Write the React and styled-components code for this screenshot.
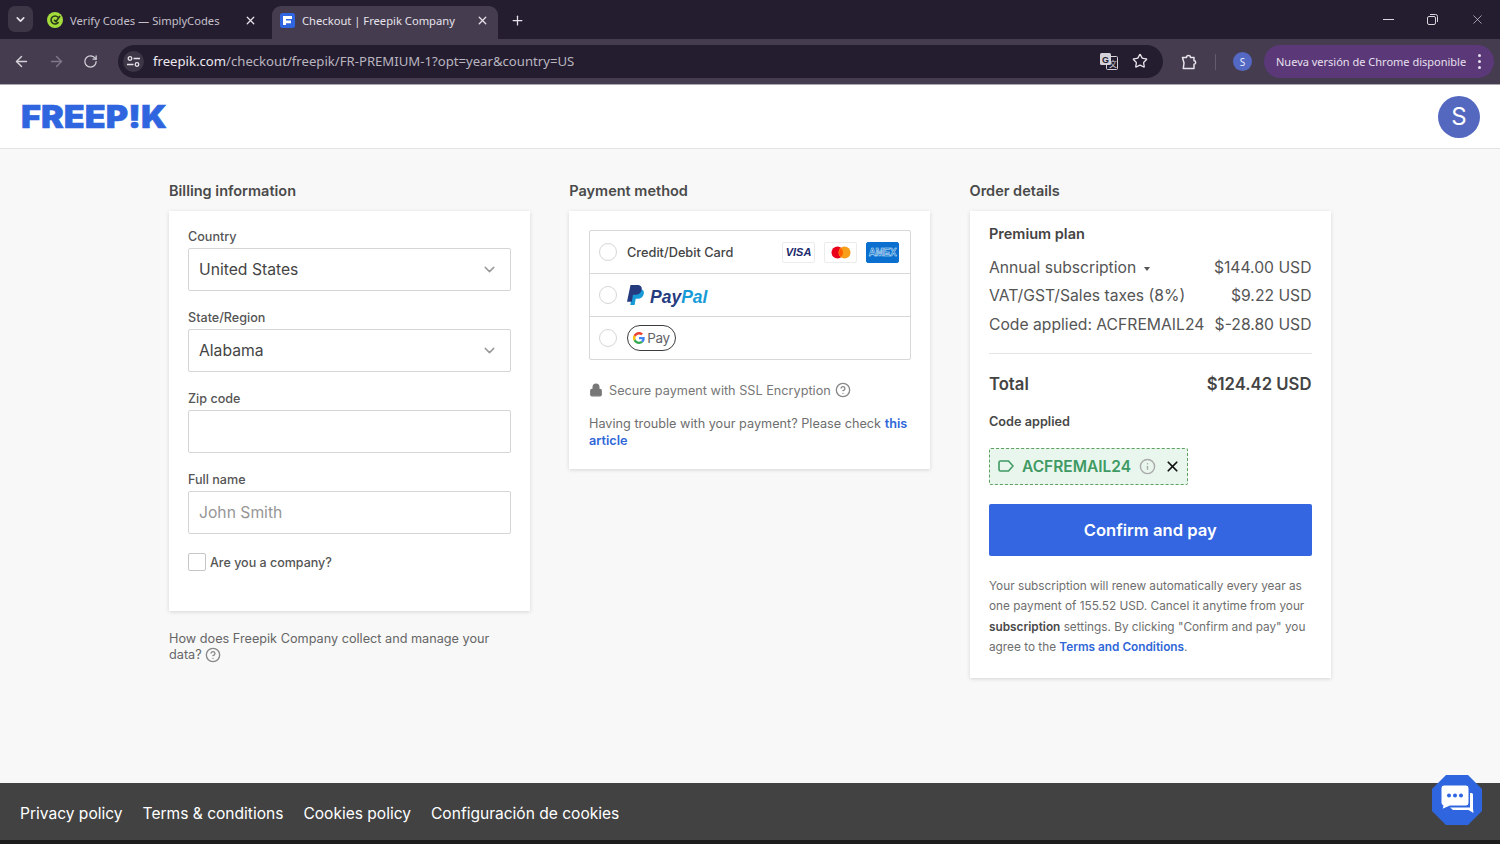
import React from 'react';
import styled, { createGlobalStyle } from 'styled-components';
import {
  ArrowLeft, ArrowRight, RotateCw, X, Plus, ChevronDown, Star, Lock, CircleHelp, Info,
} from 'lucide-react';

const GlobalStyle = createGlobalStyle`
  html, body { margin: 0; padding: 0; height: 100%; }
  body { font-family: Inter, "Liberation Sans", sans-serif; background: #f8f8f8; overflow: hidden; }
  * { box-sizing: border-box; }
`;

const Page = styled.div`
  height: 844px;
  display: flex;
  flex-direction: column;
  position: relative;
`;

/* browser chrome */
const TabStrip = styled.div`
  height: 39px;
  background: #241d30;
  display: flex;
  align-items: flex-end;
  padding-left: 8px;
  color: #d9d6de;
  font-family: "Noto Sans", sans-serif;
  font-size: 11.2px;
`;

const TabMenu = styled.div`
  width: 25px;
  height: 26px;
  margin-bottom: 7px;
  border-radius: 7px;
  background: #3d3647;
  display: flex;
  align-items: center;
  justify-content: center;
`;

const Tab = styled.div`
  width: ${p => p.$w}px;
  height: 33px;
  margin-left: ${p => p.$ml}px;
  padding: 0 ${p => p.$pr}px 5px ${p => p.$pl}px;
  display: flex;
  align-items: center;
  gap: 7px;
  border-radius: 9px 9px 0 0;
  background: ${p => (p.$active ? '#453c50' : 'transparent')};
  color: ${p => (p.$active ? '#e6e3ea' : '#c4c0ca')};
`;

const TabTitle = styled.span`
  flex: 1;
  white-space: nowrap;
`;

const NewTab = styled.div`
  margin: 0 0 6px 12px;
  height: 26px;
  display: flex;
  align-items: center;
`;

const WindowButtons = styled.div`
  margin-left: auto;
  height: 39px;
  width: 117px;
  display: flex;
  align-items: center;
  justify-content: space-between;
  padding: 0 15px 0 0;
`;

const MinimizeLine = styled.span`
  width: 11px;
  height: 1px;
  background: #d9d6de;
`;

const Toolbar = styled.div`
  height: 46px;
  background: #453c50;
  display: flex;
  align-items: center;
  padding: 0 6px 0 13px;
  border-bottom: 1px solid #a9a6ad;
`;

const NavButtons = styled.div`
  display: flex;
  align-items: center;
  gap: 18px;
  width: 105px;
`;

const Omnibox = styled.div`
  width: 1045px;
  height: 33px;
  margin-bottom: 1px;
  border-radius: 17px;
  background: #241d30;
  display: flex;
  align-items: center;
  padding: 0 15px 0 5px;
`;

const SiteBadge = styled.div`
  width: 21px;
  height: 21px;
  border-radius: 50%;
  background: #3d3647;
  display: flex;
  align-items: center;
  justify-content: center;
  margin-right: 9px;
`;

const Url = styled.div`
  flex: 1;
  font-family: "Noto Sans", sans-serif;
  font-size: 13.15px;
  color: #b9b5bf;
  white-space: nowrap;
  b { font-weight: 400; color: #ece9ef; }
`;

const OmniIcons = styled.div`
  display: flex;
  align-items: center;
  gap: 14px;
`;

const ExtArea = styled.div`
  display: flex;
  align-items: center;
  margin-left: 17px;
`;

const Separator = styled.div`
  width: 1px;
  height: 16px;
  background: #645c6e;
  margin: 0 17px 0 17px;
`;

const MiniAvatar = styled.div`
  width: 19px;
  height: 19px;
  border-radius: 50%;
  background: #5369c4;
  color: #e8eaf8;
  font-family: "Noto Sans", sans-serif;
  font-size: 10px;
  display: flex;
  align-items: center;
  justify-content: center;
`;

const UpdatePill = styled.div`
  margin-left: 12px;
  width: 230px;
  height: 33px;
  border-radius: 17px;
  background: #5b3878;
  color: #e7e0ee;
  font-family: "Noto Sans", sans-serif;
  font-size: 11px;
  display: flex;
  align-items: center;
  padding-left: 12px;
  justify-content: space-between;
  white-space: nowrap;
`;

const Dots = styled.span`
  display: flex;
  flex-direction: column;
  gap: 3px;
  margin-right: 13px;
  i { width: 3px; height: 3px; border-radius: 50%; background: #e7e0ee; }
`;

/* site header */
const SiteHeader = styled.header`
  height: 64px;
  background: #fff;
  border-bottom: 1px solid #e3e3e3;
  display: flex;
  align-items: center;
  justify-content: space-between;
  padding: 0 20px 0 21px;
`;

const Avatar = styled.div`
  width: 42px;
  height: 42px;
  border-radius: 50%;
  background: #5468c0;
  color: #fff;
  font-size: 24px;
  display: flex;
  align-items: center;
  justify-content: center;
`;

/* page body */
const Main = styled.main`
  flex: 1;
  display: grid;
  grid-template-columns: 361px 361px 361.5px;
  column-gap: 39.25px;
  justify-content: start;
  align-items: start;
  padding: 32px 0 0 169px;
`;

const Column = styled.section``;

const Heading = styled.h2`
  margin: 0 0 11px;
  font-size: 14.5px;
  line-height: 19px;
  font-weight: 600;
  color: #4a4a4a;
`;

const Card = styled.div`
  background: #fff;
  box-shadow: 0 1px 4px rgba(0, 0, 0, 0.14);
  padding: ${p => p.$pad};
  height: ${p => p.$h}px;
`;

const Field = styled.div`
  margin-bottom: 19px;
`;

const Label = styled.div`
  font-size: 12.6px;
  line-height: 16px;
  font-weight: 500;
  color: #555;
  margin-bottom: 3px;
`;

const InputBox = styled.div`
  height: 43px;
  border: 1px solid #d5d5d5;
  border-radius: 2px;
  padding: 0 12px 0 10px;
  display: flex;
  align-items: center;
  justify-content: space-between;
  font-size: 15.7px;
  color: ${p => (p.$placeholder ? '#969696' : '#444')};
`;

const CheckRow = styled.label`
  display: flex;
  align-items: center;
  gap: 4px;
  font-size: 12.5px;
  font-weight: 500;
  color: #555;
  margin-top: 4.5px;
`;

const CheckBox = styled.span`
  width: 18px;
  height: 18px;
  border: 1px solid #c6c6c6;
  border-radius: 2px;
`;

const DataNote = styled.p`
  margin: 20px 0 0;
  font-size: 12.7px;
  line-height: 15.5px;
  color: #666;
  width: 340px;
  svg { vertical-align: -4px; }
`;

const Methods = styled.div`
  border: 1px solid #d8d8d8;
  border-radius: 2px;
`;

const Method = styled.div`
  height: ${p => (p.$first ? 42 : 43)}px;
  display: flex;
  align-items: center;
  padding: 0 11px 0 9px;
  gap: 10px;
  border-top: ${p => (p.$first ? 'none' : '1px solid #d8d8d8')};
`;

const Radio = styled.span`
  width: 18px;
  height: 18px;
  border: 1px solid #d6d6d6;
  border-radius: 50%;
  flex: none;
`;

const MethodName = styled.span`
  flex: 1;
  font-size: 12.75px;
  font-weight: 500;
  color: #444;
`;

const CardLogos = styled.div`
  display: flex;
  gap: 8.5px;
`;

const CardLogo = styled.span`
  width: 33.5px;
  height: 21px;
  border: 1px solid #ececec;
  border-radius: 2px;
  background: #fff;
  color: #1a2a6c;
  display: flex;
  align-items: center;
  justify-content: center;
  font-family: "Liberation Sans", sans-serif;
  font-size: 11px;
  font-weight: 700;
  font-style: italic;
`;

const AmexLogo = styled(CardLogo)`
  background: #0a6fcf;
  border-color: #0a6fcf;
  color: #0a6fcf;
  font-size: 10px;
  font-style: normal;
  letter-spacing: -0.3px;
  -webkit-text-stroke: 0.5px #dcebf8;
`;

const PayPalMark = styled.span`
  display: flex;
  align-items: center;
  gap: 6px;
  height: 22px;
  font-family: "Liberation Sans", sans-serif;
  font-size: 17.5px;
  font-weight: 700;
  font-style: italic;
  color: #253b80;
  em { color: #179bd7; }
`;

const PayPalWord = styled.span`
  padding-top: 4px;
`;

const GPay = styled.span`
  width: 49px;
  height: 26px;
  border: 1px solid #3c3c3c;
  border-radius: 13px;
  display: flex;
  align-items: center;
  justify-content: center;
  gap: 2px;
  font-size: 13.5px;
  letter-spacing: -0.3px;
  color: #5f6368;
`;

const Secure = styled.div`
  margin-top: 21px;
  display: flex;
  align-items: center;
  font-size: 12.7px;
  color: #777;
  height: 18px;
  svg { flex: none; }
`;

const SecureText = styled.span`
  margin: 0 4px 0 6px;
`;

const Trouble = styled.p`
  margin: 16px 0 0;
  font-size: 12.7px;
  line-height: 17px;
  color: #6e6e6e;
  a { color: #2f67d8; font-weight: 600; text-decoration: none; }
`;

const PlanTitle = styled.div`
  font-size: 14.5px;
  font-weight: 600;
  color: #444;
  line-height: 18px;
  margin-bottom: 10px;
`;

const PriceRow = styled.div`
  display: flex;
  justify-content: space-between;
  align-items: center;
  height: 28.5px;
  font-size: 15.7px;
  color: #555;
  white-space: nowrap;
`;

const Caret = styled.span`
  display: inline-block;
  margin-left: 8px;
  vertical-align: 2px;
  border-left: 3.5px solid transparent;
  border-right: 3.5px solid transparent;
  border-top: 4px solid #555;
`;

const Divider = styled.hr`
  border: none;
  border-top: 1px solid #e4e4e4;
  margin: 14px 0 19px;
`;

const TotalRow = styled.div`
  display: flex;
  justify-content: space-between;
  font-size: 16.7px;
  line-height: 22px;
  font-weight: 600;
  color: #444;
`;

const CodeLabel = styled.div`
  margin-top: 19px;
  font-size: 12.7px;
  line-height: 16px;
  font-weight: 600;
  color: #484848;
`;

const CodeChip = styled.div`
  margin-top: 18px;
  width: 199px;
  height: 37px;
  background: #e9f6ee;
  border: 1px dashed #5da05f;
  border-radius: 2px;
  display: flex;
  align-items: center;
  padding-left: 8px;
  color: #3f9a63;
  font-size: 15.5px;
  font-weight: 600;
`;

const CodeText = styled.span`
  margin: 0 8px 0 8px;
`;

const RemoveIcon = styled(X)`
  margin-left: 8px;
`;

const ConfirmButton = styled.button`
  display: block;
  margin-top: 19px;
  width: 100%;
  height: 52px;
  border: none;
  border-radius: 2px;
  background: #3366e0;
  color: #fff;
  font-family: inherit;
  font-size: 16.6px;
  font-weight: 600;
`;

const Legal = styled.p`
  margin: 20px 0 0;
  font-size: 11.8px;
  line-height: 20.6px;
  color: #6e6e6e;
  b { font-weight: 600; color: #4a4a4a; }
  a { color: #2f67d8; font-weight: 600; }
`;

/* footer */
const Footer = styled.footer`
  height: 61px;
  background: #424242;
  border-bottom: 4px solid #1c1c1c;
  display: flex;
  align-items: center;
  gap: 20px;
  padding: 3px 0 0 20px;
  font-size: 15.55px;
  color: #fff;
`;

const ChatButton = styled.div`
  position: absolute;
  left: 1432px;
  top: 775px;
  width: 50px;
  height: 50px;
  background: #2f66e0;
  clip-path: polygon(28% 0, 72% 0, 100% 28%, 100% 72%, 72% 100%, 28% 100%, 0 72%, 0 28%);
  display: flex;
  align-items: center;
  justify-content: center;
`;

const Logo = () => (
  <svg width="150" height="38" viewBox="0 0 150 38">
    <text x="0" y="30" fontFamily="Inter" fontWeight="900" fontSize="31" fill="#2f66e0" stroke="#2f66e0" strokeWidth=".5" textLength="146" lengthAdjust="spacingAndGlyphs">FREEP!K</text>
  </svg>
);

const SimplyIcon = () => (
  <svg width="16" height="16" viewBox="0 0 16 16">
    <circle cx="8" cy="8" r="8" fill="#a4dc3c" />
    <path d="M11 5.200A4 4 0 1 0 11.500 10M7 8l2 1.500L13 4" fill="none" stroke="#2a3a1a" strokeWidth="1.600" />
  </svg>
);

const FreepikFavicon = () => (
  <svg width="15" height="15" viewBox="0 0 15 15">
    <rect width="15" height="15" rx="2.500" fill="#2f66e0" />
    <path d="M3 3h9v3H6v1.600h5v2.600H6V12H3z" fill="#fff" />
  </svg>
);

const TuneIcon = () => (
  <svg width="13" height="13" viewBox="0 0 13 13" fill="none" stroke="#e6e3ea" strokeWidth="1.300">
    <circle cx="3" cy="3.500" r="1.800" />
    <path d="M6.500 3.500H13M0 9.500h6.500" />
    <circle cx="10" cy="9.500" r="1.800" />
  </svg>
);

const TranslateIcon = () => (
  <svg width="18" height="17" viewBox="0 0 18 17">
    <rect x="6.500" y="3.500" width="11" height="13" rx="1" fill="#241d30" stroke="#d5d2da" />
    <rect x="0" y="0" width="11" height="12" rx="1.500" fill="#d5d2da" />
    <text x="5.500" y="9.500" fontSize="9" fontWeight="700" fontFamily="Liberation Sans" textAnchor="middle" fill="#241d30">G</text>
    <text x="13" y="13.500" fontSize="8" fontFamily="Noto Sans CJK SC" textAnchor="middle" fill="#d5d2da">文</text>
  </svg>
);

const ExtensionIcon = () => (
  <svg width="18" height="18" viewBox="0 0 18 18" fill="none" stroke="#e6e3ea" strokeWidth="1.500" strokeLinejoin="round">
    <path d="M2.500 4.500h4a2 2 0 0 1 4 0h3.500v3.300a1.700 1.700 0 0 1 0 3.400v4.300H3.300l.7-5.500z" />
  </svg>
);

const PayPalIcon = () => (
  <svg width="17" height="20" viewBox="0 0 17 20">
    <path d="M6.500 4h5.900c3.200 0 5 1.600 4.400 4.800-.7 3.400-3 5-6 5H8.700L7.600 20H3.200z" fill="#179bd7" />
    <path d="M3.500 0h6.600c3.400 0 5.200 1.800 4.600 4.800-.7 3.400-3 5-6.200 5H6L4.800 16.800H0z" fill="#253b80" />
  </svg>
);

const GoogleG = () => (
  <svg width="12" height="12" viewBox="0 0 48 48">
    <path fill="#EA4335" d="M24 9.500c3.500 0 6.700 1.200 9.200 3.600l6.900-6.900C35.900 2.400 30.500 0 24 0 14.600 0 6.500 5.400 2.600 13.200l8 6.200C12.500 13.600 17.800 9.500 24 9.500z" />
    <path fill="#4285F4" d="M47 24.500c0-1.600-.1-3.100-.4-4.500H24v9h12.900c-.6 3-2.200 5.500-4.700 7.200l7.700 6c4.500-4.200 7.100-10.300 7.100-17.700z" />
    <path fill="#FBBC05" d="M10.600 28.600c-.5-1.400-.8-3-.8-4.600s.3-3.200.8-4.600l-8-6.200C.9 16.500 0 20.100 0 24s.9 7.500 2.600 10.800z" />
    <path fill="#34A853" d="M24 48c6.500 0 11.900-2.100 15.900-5.800l-7.700-6c-2.200 1.500-4.900 2.300-8.200 2.300-6.200 0-11.500-4.200-13.400-9.800l-8 6.200C6.500 42.600 14.600 48 24 48z" />
  </svg>
);

const TagIcon = () => (
  <svg width="16" height="12" viewBox="0 0 16 12" fill="none" stroke="#3f9a63" strokeWidth="1.600">
    <path d="M2.500 1h8L15 6l-4.500 5h-8A1.500 1.500 0 0 1 1 9.500v-7A1.500 1.500 0 0 1 2.500 1z" />
  </svg>
);

const ChatIcon = () => (
  <svg width="36" height="36" viewBox="0 0 36 36">
    <path d="M31 11h1.500A1.500 1.500 0 0 1 34 12.500V26.500l.5 4.500-5-3H14l-3-2.500h20z" fill="#fff" />
    <path d="M5 3h22a3 3 0 0 1 3 3v15a3 3 0 0 1-3 3H11l-8 3.500 1-4A3 3 0 0 1 2 21V6a3 3 0 0 1 3-3z" fill="#fff" stroke="#2f66e0" strokeWidth="1" />
    <circle cx="10" cy="13.500" r="2" fill="#2f66e0" />
    <circle cx="16" cy="13.500" r="2" fill="#2f66e0" />
    <circle cx="22" cy="13.500" r="2" fill="#2f66e0" />
  </svg>
);

const RestoreIcon = () => (
  <svg width="11" height="11" viewBox="0 0 11 11" fill="none" stroke="#d9d6de">
    <rect x=".5" y="2.500" width="8" height="8" rx="1.500" />
    <path d="M3 .5h5.500a2 2 0 0 1 2 2V8" />
  </svg>
);

const fieldData = [
  { label: 'Country', value: 'United States', select: true },
  { label: 'State/Region', value: 'Alabama', select: true },
  { label: 'Zip code', value: '' },
  { label: 'Full name', value: 'John Smith', placeholder: true },
];

const prices = [
  { name: <>Annual subscription<Caret /></>, value: '$144.00 USD' },
  { name: 'VAT/GST/Sales taxes (8%)', value: '$9.22 USD' },
  { name: 'Code applied: ACFREMAIL24', value: '$-28.80 USD' },
];

const footerLinks = ['Privacy policy', 'Terms & conditions', 'Cookies policy', 'Configuración de cookies'];

export default function App() {
  return (
    <Page>
      <GlobalStyle />
      <TabStrip>
        <TabMenu><ChevronDown size={13} strokeWidth={3} color="#e6e3ea" /></TabMenu>
        <Tab $w={232} $ml={3} $pl={11} $pr={11}>
          <SimplyIcon />
          <TabTitle>Verify Codes — SimplyCodes</TabTitle>
          <X size={13} strokeWidth={2.4} color="#e6e3ea" />
        </Tab>
        <Tab $w={226} $active $ml={4} $pl={8} $pr={9}>
          <FreepikFavicon />
          <TabTitle>Checkout | Freepik Company</TabTitle>
          <X size={13} strokeWidth={2.4} color="#e6e3ea" />
        </Tab>
        <NewTab><Plus size={15} strokeWidth={2} color="#e6e3ea" /></NewTab>
        <WindowButtons>
          <MinimizeLine />
          <RestoreIcon />
          <X size={15} strokeWidth={1.1} color="#d9d6de" />
        </WindowButtons>
      </TabStrip>
      <Toolbar>
        <NavButtons>
          <ArrowLeft size={17} strokeWidth={2} color="#d5d2da" />
          <ArrowRight size={17} strokeWidth={2} color="#7f7888" />
          <RotateCw size={15} strokeWidth={2} color="#d5d2da" />
        </NavButtons>
        <Omnibox>
          <SiteBadge><TuneIcon /></SiteBadge>
          <Url><b>freepik.com</b>/checkout/freepik/FR-PREMIUM-1?opt=year&amp;country=US</Url>
          <OmniIcons>
            <TranslateIcon />
            <Star size={16} strokeWidth={2} color="#e6e3ea" />
          </OmniIcons>
        </Omnibox>
        <ExtArea>
          <ExtensionIcon />
          <Separator />
          <MiniAvatar>S</MiniAvatar>
        </ExtArea>
        <UpdatePill>
          Nueva versión de Chrome disponible
          <Dots><i /><i /><i /></Dots>
        </UpdatePill>
      </Toolbar>

      <SiteHeader>
        <Logo />
        <Avatar>S</Avatar>
      </SiteHeader>

      <Main>
        <Column>
          <Heading>Billing information</Heading>
          <Card $h={400} $pad="18px 19px">
            {fieldData.map(f => (
              <Field key={f.label}>
                <Label>{f.label}</Label>
                <InputBox $placeholder={f.placeholder}>
                  {f.value}
                  {f.select && <ChevronDown size={17} strokeWidth={2} color="#999" />}
                </InputBox>
              </Field>
            ))}
            <CheckRow><CheckBox />Are you a company?</CheckRow>
          </Card>
          <DataNote>
            How does Freepik Company collect and manage your data? <CircleHelp size={16} color="#888" />
          </DataNote>
        </Column>

        <Column>
          <Heading>Payment method</Heading>
          <Card $h={258} $pad="19px 19px 19px 19.75px">
            <Methods>
              <Method $first>
                <Radio />
                <MethodName>Credit/Debit Card</MethodName>
                <CardLogos>
                  <CardLogo>VISA</CardLogo>
                  <CardLogo>
                    <svg width="20" height="13" viewBox="0 0 20 13">
                      <circle cx="6.500" cy="6.500" r="6" fill="#eb001b" />
                      <circle cx="13.500" cy="6.500" r="6" fill="#f79e1b" />
                      <path d="M10 2a6 6 0 0 1 0 9a6 6 0 0 1 0-9z" fill="#ff5f00" />
                    </svg>
                  </CardLogo>
                  <AmexLogo>AMEX</AmexLogo>
                </CardLogos>
              </Method>
              <Method>
                <Radio />
                <PayPalMark>
                  <PayPalIcon />
                  <PayPalWord>Pay<em>Pal</em></PayPalWord>
                </PayPalMark>
              </Method>
              <Method>
                <Radio />
                <GPay><GoogleG />Pay</GPay>
              </Method>
            </Methods>
            <Secure>
              <Lock size={14} fill="#777" color="#777" />
              <SecureText>Secure payment with SSL Encryption</SecureText>
              <CircleHelp size={16} color="#888" />
            </Secure>
            <Trouble>
              Having trouble with your payment? Please check <a href="#a">this article</a>
            </Trouble>
          </Card>
        </Column>

        <Column>
          <Heading>Order details</Heading>
          <Card $h={467} $pad="14px 19.5px">
            <PlanTitle>Premium plan</PlanTitle>
            {prices.map(p => (
              <PriceRow key={p.value}><span>{p.name}</span><span>{p.value}</span></PriceRow>
            ))}
            <Divider />
            <TotalRow><span>Total</span><span>$124.42 USD</span></TotalRow>
            <CodeLabel>Code applied</CodeLabel>
            <CodeChip>
              <TagIcon />
              <CodeText>ACFREMAIL24</CodeText>
              <Info size={17} color="#aaa" />
              <RemoveIcon size={17} strokeWidth={2.4} color="#111" />
            </CodeChip>
            <ConfirmButton>Confirm and pay</ConfirmButton>
            <Legal>
              Your subscription will renew automatically every year as one payment of 155.52 USD. Cancel it anytime from your <b>subscription</b> settings. By clicking "Confirm and pay" you agree to the <a>Terms and Conditions</a>.
            </Legal>
          </Card>
        </Column>
      </Main>

      <Footer>
        {footerLinks.map(l => <span key={l}>{l}</span>)}
      </Footer>
      <ChatButton><ChatIcon /></ChatButton>
    </Page>
  );
}
